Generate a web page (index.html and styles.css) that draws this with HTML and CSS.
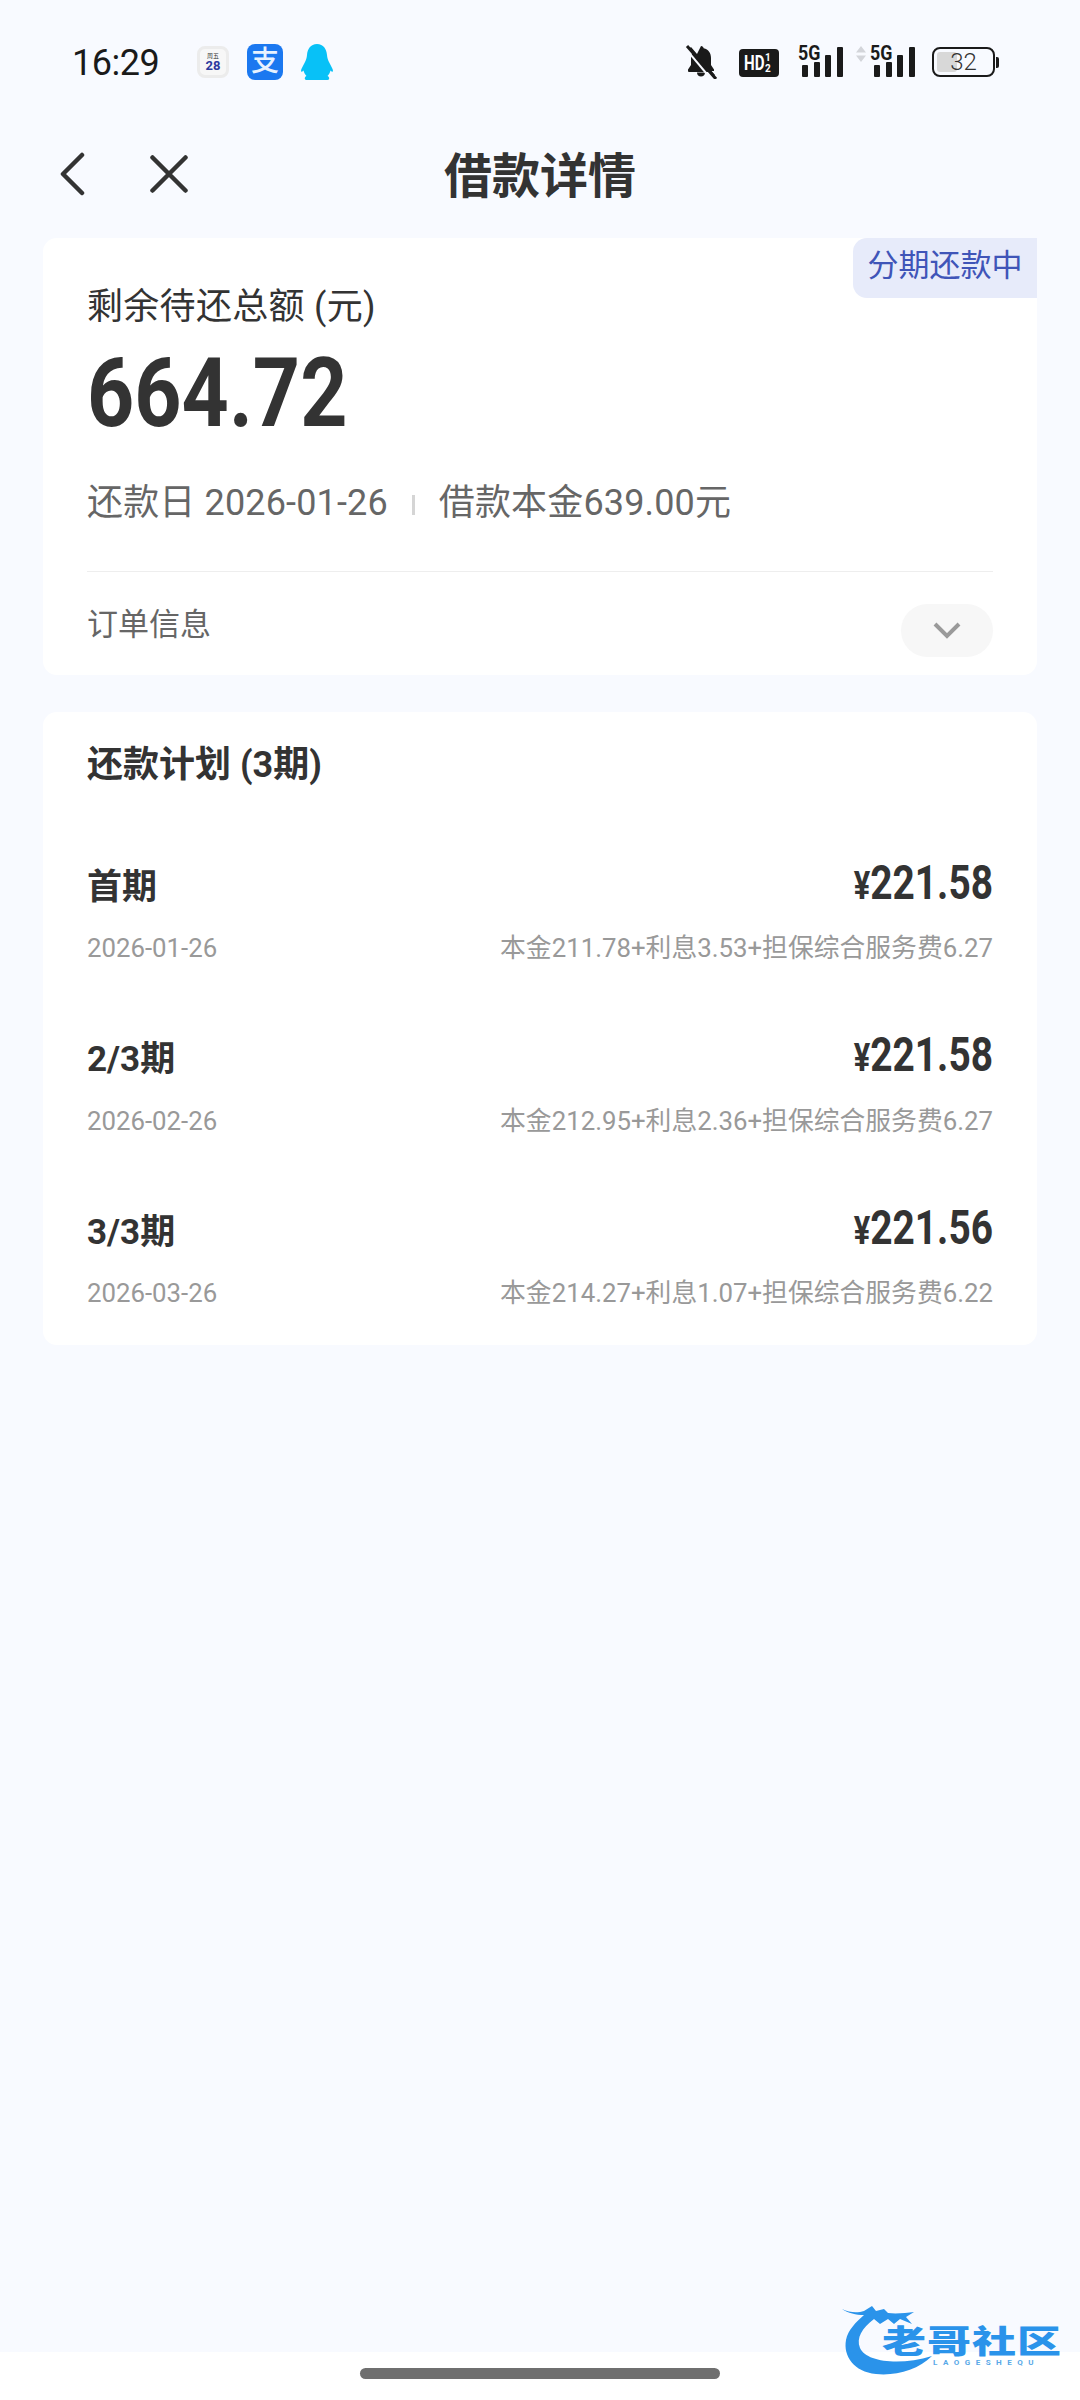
FILE: index.html
```html
<!DOCTYPE html>
<html lang="zh-CN">

<head>
    <meta charset="UTF-8">
    <meta name="viewport" content="width=device-width, initial-scale=1.0">
    <title>借款详情</title>
    <link rel="stylesheet" href="styles.css">
</head>

<body>

    <div class="status-bar">
        <span class="clock">16:29</span>
        <div class="app-icons">
            <div class="cal-icon"><span class="cal-day">周五</span><span class="cal-num">28</span></div>
            <div class="pay-icon">支</div>
            <svg class="qq-icon" width="32" height="36" viewBox="0 0 32 36">
                <path fill="#08c1f7" d="M16 0c6.500 0 9.500 5 10 11 .2 3 1 5 2.500 8 1.500 3 3.500 6 3.500 8 0 1-1 1-2.500-.5-.5 2-1.500 4-3 5.500 2 .7 2.500 4 0 4H5.500c-2.500 0-2-3.300 0-4-1.500-1.500-2.500-3.500-3-5.500C1 28 0 28 0 27c0-2 2-5 3.500-8C5 16 5.800 14 6 11 6.500 5 9.500 0 16 0z"/>
            </svg>
        </div>
        <div class="sys-icons">
            <svg class="bell-icon" width="32" height="34" viewBox="0 0 32 34">
                <path fill="#1a1a1a" d="M16 1c1.500 0 2.500 1 2.700 2.300C23.500 4.500 26 8 26 13v7l3 4.500v1.500H3v-1.500L6 20v-7c0-2 .5-3.700 1.300-5.200L4 4 6 2l24 28-2 2-4-5H3"/>
                <path fill="#1a1a1a" d="M12 27.500h8c0 2.500-1.800 4-4 4s-4-1.500-4-4z"/>
                <path stroke="#f8faff" stroke-width="2" d="M0 3l26 31"/>
                <path stroke="#1a1a1a" stroke-width="3" d="M2 1l29 33"/>
            </svg>
            <div class="hd-icon"><span class="hd-text">HD</span><span class="hd-sims"><i>1</i><i>2</i></span></div>
            <div class="signal">
                <span class="net">5G</span>
                <div class="bars"><i class="b1"></i><i class="b2"></i><i class="b3"></i><i class="b4"></i></div>
            </div>
            <div class="signal second">
                <svg class="updown" width="10" height="16" viewBox="0 0 10 16">
                    <path fill="#d3d5da" d="M5 0l5 6.500H0zM5 16L0 9.500h10z"/>
                </svg>
                <span class="net">5G</span>
                <div class="bars"><i class="b1"></i><i class="b2"></i><i class="b3"></i><i class="b4"></i></div>
            </div>
            <div class="battery">
                <div class="batt-body"><div class="batt-fill"></div><span class="batt-num">32</span></div>
                <div class="batt-tip"></div>
            </div>
        </div>
    </div>

    <header class="nav">
        <svg class="nav-back" width="28" height="44" viewBox="0 0 28 44">
            <path fill="none" stroke="#333" stroke-width="4.500" stroke-linecap="round" stroke-linejoin="round" d="M23 3L4 22l19 19"/>
        </svg>
        <svg class="nav-close" width="38" height="38" viewBox="0 0 38 38">
            <path fill="none" stroke="#333" stroke-width="4.500" stroke-linecap="round" d="M2.500 2.500l33 33M35.500 2.500l-33 33"/>
        </svg>
        <h1 class="nav-title">借款详情</h1>
    </header>

    <main class="content">
        <section class="card summary">
            <div class="tag">分期还款中</div>
            <div class="summary-label">剩余待还总额 (元)</div>
            <div class="summary-amount"><span class="amount-num">664.72</span></div>
            <div class="summary-meta">还款日 2026-01-26<i class="meta-sep"></i>借款本金639.00元</div>
            <div class="order-row">
                <span class="order-label">订单信息</span>
                <div class="order-toggle">
                    <svg width="28" height="18" viewBox="0 0 28 18">
                        <path fill="none" stroke="#9a9a9a" stroke-width="4" d="M2 2l12 12L26 2"/>
                    </svg>
                </div>
            </div>
        </section>

        <section class="card plan">
            <h2 class="plan-title">还款计划 (3期)</h2>

            <div class="plan-row">
                <div class="row-top">
                    <span class="row-name">首期</span>
                    <span class="row-money"><span class="money-num"><small>¥</small>221.58</span></span>
                </div>
                <div class="row-bottom">
                    <span>2026-01-26</span>
                    <span>本金211.78+利息3.53+担保综合服务费6.27</span>
                </div>
            </div>

            <div class="plan-row">
                <div class="row-top">
                    <span class="row-name">2/3期</span>
                    <span class="row-money"><span class="money-num"><small>¥</small>221.58</span></span>
                </div>
                <div class="row-bottom">
                    <span>2026-02-26</span>
                    <span>本金212.95+利息2.36+担保综合服务费6.27</span>
                </div>
            </div>

            <div class="plan-row">
                <div class="row-top">
                    <span class="row-name">3/3期</span>
                    <span class="row-money"><span class="money-num"><small>¥</small>221.56</span></span>
                </div>
                <div class="row-bottom">
                    <span>2026-03-26</span>
                    <span>本金214.27+利息1.07+担保综合服务费6.22</span>
                </div>
            </div>
        </section>
    </main>

    <footer class="home-area">
        <div class="home-bar"></div>
    </footer>

    <div class="watermark">
        <svg class="wm-dragon" width="100" height="72" viewBox="0 0 100 72">
            <path fill="#2a93ea" d="M2 5C10 9 18 9 24 7L32 2l4 5 8-2 4 4c8 1 18 0 26-1l-8 5 6 7-12-5-6 5-6-5-8 5-6-5C22 24 16 34 20 44c6 14 40 18 72 8-14 14-36 20-56 18C14 68 3 52 6 36c2-10 10-18 18-25-8 0-16-2-22-6z"/>
        </svg>
        <span class="wm-name">老哥社区</span>
        <span class="wm-sub">LAOGESHEQU</span>
    </div>

</body>

</html>
```

FILE: styles.css
```css
* {
    box-sizing: border-box;
}

html,
body {
    margin: 0;
    padding: 0;
}

body {
    position: relative;
    width: 1080px;
    height: 2400px;
    overflow: hidden;
    display: flex;
    flex-direction: column;
    background-color: #f8faff;
    color: #333;
    font-family: "Roboto", "Noto Sans CJK SC", sans-serif;
}

/* status bar */
.status-bar {
    height: 124px;
    padding: 0 81px 0 72px;
    display: flex;
    align-items: center;
    color: #1a1a1a;
}

.clock {
    margin-top: 2px;
    font-size: 36px;
    letter-spacing: -0.5px;
    width: 125px;
}

.app-icons {
    display: flex;
    align-items: center;
    gap: 18px;
}

.cal-icon {
    width: 32px;
    height: 32px;
    border-radius: 8px;
    background-color: #f7f7f7;
    border: 3px solid #ececec;
    display: flex;
    flex-direction: column;
    align-items: center;
    justify-content: center;
    line-height: 1;
}

.cal-day {
    font-size: 6px;
    color: #333;
}

.cal-num {
    font-size: 13px;
    font-weight: 700;
    color: #2d3a9e;
}

.pay-icon {
    width: 36px;
    height: 36px;
    border-radius: 8px;
    background-color: #1b78f0;
    color: #e8f2ff;
    font-size: 28px;
    font-weight: 500;
    line-height: 35px;
    text-align: center;
}

.sys-icons {
    margin-left: auto;
    display: flex;
    align-items: flex-end;
    height: 34px;
}

.bell-icon {
    margin-right: 22px;
}

.hd-icon {
    width: 40px;
    height: 28px;
    margin-right: 19px;
    margin-bottom: 2px;
    border-radius: 4px;
    background-color: #1a1a1a;
    color: #fff;
    display: flex;
    align-items: center;
    padding-left: 5px;
    font-weight: 700;
}

.hd-text {
    display: inline-block;
    width: 21px;
    font-size: 21px;
    white-space: nowrap;
    transform: scaleX(.72);
    transform-origin: left center;
}

.hd-sims {
    display: flex;
    flex-direction: column;
    font-size: 10px;
    line-height: 11px;
}

.hd-sims i {
    font-style: normal;
}

.signal {
    position: relative;
    width: 45px;
    height: 34px;
}

.signal.second {
    margin-left: 27px;
}

.net {
    position: absolute;
    left: 0;
    top: 0;
    font-size: 21px;
    font-weight: 700;
    line-height: 16px;
    transform: scaleX(.85);
    transform-origin: left;
}

.updown {
    position: absolute;
    left: -14px;
    top: 1px;
}

.bars {
    position: absolute;
    left: 4px;
    right: 0;
    bottom: 2px;
    display: flex;
    align-items: flex-end;
    justify-content: space-between;
}

.bars i {
    display: block;
    width: 6px;
    border-radius: 1px;
    background-color: #1a1a1a;
}

.b1 {
    height: 12px;
}

.b2 {
    height: 15px;
}

.b3 {
    height: 22px;
}

.b4 {
    height: 30px;
}

.battery {
    margin-left: 17px;
    margin-bottom: 2px;
    display: flex;
    align-items: center;
    height: 30px;
}

.batt-body {
    position: relative;
    width: 63px;
    height: 30px;
    border: 2px solid #1a1a1a;
    border-radius: 8px;
    text-align: center;
}

.batt-fill {
    position: absolute;
    left: 3px;
    top: 3px;
    bottom: 3px;
    width: 20px;
    border-radius: 3px;
    background-color: #d8d8d8;
}

.batt-num {
    position: relative;
    font-size: 24px;
    font-weight: 300;
    line-height: 26px;
    color: #333;
    display: block;
}

.batt-tip {
    width: 3px;
    height: 11px;
    margin-left: 1px;
    background-color: #1a1a1a;
    border-radius: 0 2px 2px 0;
}

/* nav */
.nav {
    position: relative;
    height: 114px;
    display: flex;
    align-items: center;
    justify-content: center;
}

.nav-back {
    position: absolute;
    left: 59px;
    top: 28px;
}

.nav-close {
    position: absolute;
    left: 150px;
    top: 31px;
}

.nav-title {
    margin: 0 0 9px;
    font-size: 48px;
    font-weight: 700;
    line-height: 60px;
}

/* cards */
.content {
    flex: 1;
    padding: 0 43px;
    display: flex;
    flex-direction: column;
    gap: 37px;
}

.card {
    position: relative;
    background-color: #fff;
    border-radius: 14px;
    padding: 0 44px;
}

.summary {
    height: 437px;
}

.tag {
    position: absolute;
    right: 0;
    top: 0;
    width: 184px;
    height: 60px;
    background-color: #e7ebfa;
    border-radius: 14px 0 0 14px;
    color: #3f55b8;
    font-size: 31px;
    line-height: 56px;
    text-align: center;
    white-space: nowrap;
}

.summary-label {
    padding-top: 46px;
    font-size: 36px;
    letter-spacing: .3px;
    line-height: 46px;
    white-space: nowrap;
}

.summary-amount {
    margin-top: 13px;
    font-size: 97px;
    font-weight: 700;
    line-height: 100px;
}

.amount-num {
    display: inline-block;
    transform: scaleX(.85);
    transform-origin: left center;
}

.summary-meta {
    margin-top: 36px;
    font-size: 36px;
    letter-spacing: .15px;
    line-height: 48px;
    color: #666;
    white-space: nowrap;
}

.meta-sep {
    display: inline-block;
    width: 3px;
    height: 20px;
    margin: 0 24px;
    background-color: #d5d5d5;
}

.order-row {
    margin-top: 44px;
    border-top: 1px solid #eee;
    display: flex;
    align-items: flex-start;
    justify-content: space-between;
    color: #666;
    font-size: 31px;
}

.order-label {
    margin-top: 33px;
    line-height: 40px;
}

.order-toggle {
    width: 92px;
    height: 53px;
    margin-top: 32px;
    border-radius: 27px;
    background-color: #f7f7f7;
    display: flex;
    align-items: center;
    justify-content: center;
}

.plan {
    height: 633px;
}

.plan-title {
    margin: 0 0 70px;
    padding-top: 30px;
    font-size: 36px;
    line-height: 46px;
    font-weight: 700;
}

.plan-row {
    height: 172.5px;
}

.row-top {
    display: flex;
    align-items: center;
    justify-content: space-between;
    height: 50px;
}

.row-name {
    font-size: 35px;
    font-weight: 700;
}

.row-money {
    margin-bottom: 2px;
    font-size: 48px;
    font-weight: 700;
}

.money-num {
    display: inline-block;
    white-space: nowrap;
    transform: scaleX(.81);
    transform-origin: right center;
}

.money-num small {
    font-size: 38px;
}

.row-bottom {
    display: flex;
    align-items: baseline;
    justify-content: space-between;
    margin-top: 20px;
    color: #999;
    font-size: 25.800px;
    line-height: 40px;
}

/* bottom */
.home-area {
    height: 48px;
    background-color: #fff;
    display: flex;
    justify-content: center;
    padding-top: 16px;
}

.home-bar {
    width: 360px;
    height: 11px;
    border-radius: 6px;
    background-color: #6f6f6f;
}

.watermark {
    position: absolute;
    left: 840px;
    top: 2304px;
    width: 230px;
    height: 80px;
    color: #2a93ea;
}

.wm-dragon {
    position: absolute;
    left: 0;
    top: 0;
}

.wm-name {
    position: absolute;
    left: 42px;
    top: 20px;
    font-size: 44px;
    font-weight: 900;
    line-height: 50px;
    white-space: nowrap;
    letter-spacing: 1px;
    transform: scaleY(.72);
    transform-origin: left top;
}

.wm-sub {
    position: absolute;
    left: 93px;
    top: 54px;
    font-size: 8px;
    font-weight: 700;
    letter-spacing: 5.500px;
    color: #5aa9e8;
    white-space: nowrap;
}
```
